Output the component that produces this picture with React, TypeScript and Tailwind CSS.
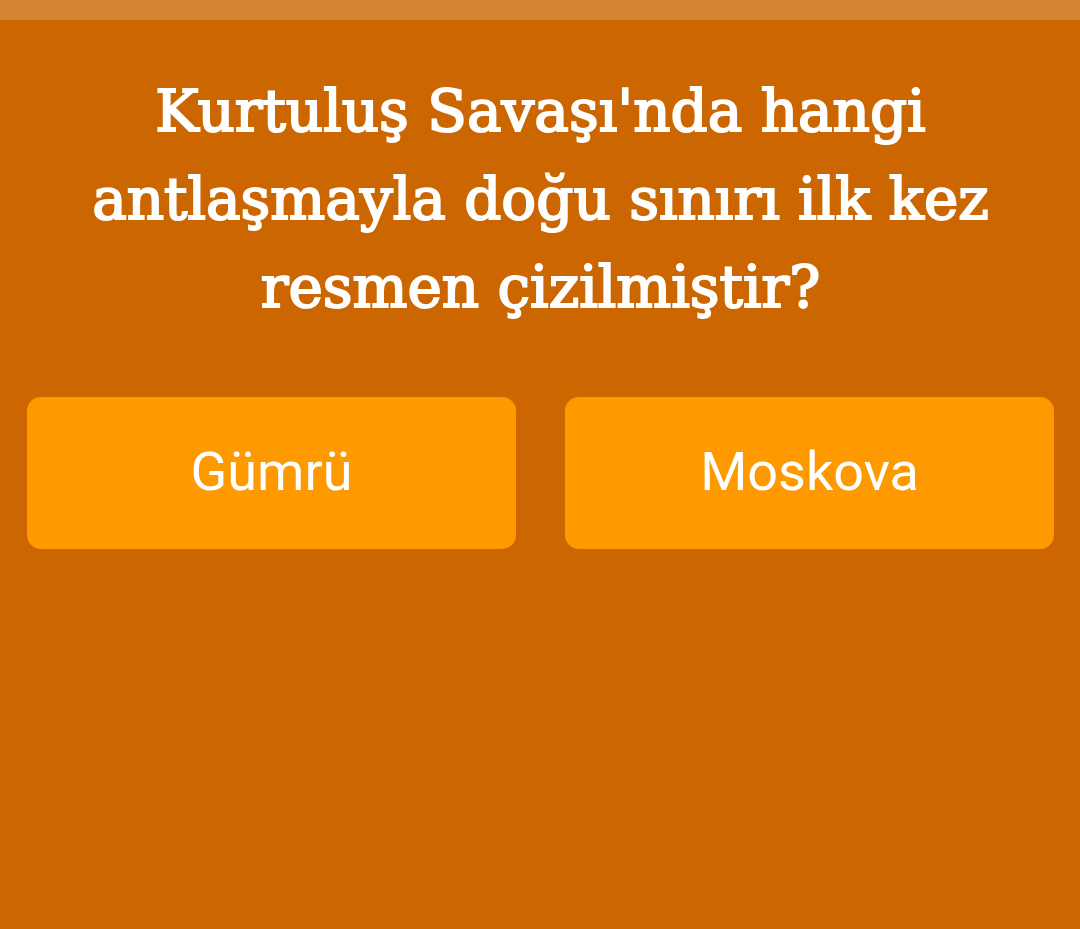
const answers = ["Gümrü", "Moskova"];

export default function App() {
  return (
    <main className="min-h-screen bg-[#cc6600]">
      <div className="h-5 bg-[#d68533]" />
      <div className="pt-[47px] pr-[26px] pl-[27px]">
        <h1 className="text-center font-['DejaVu_Serif',serif] text-[58px] leading-[88px] text-white [-webkit-text-stroke:2px_white]">
          Kurtuluş Savaşı'nda hangi
          <br />
          antlaşmayla doğu sınırı ilk kez
          <br />
          resmen çizilmiştir?
        </h1>
        <div className="mt-[66px] grid grid-cols-2 gap-[49px]">
          {answers.map((answer) => (
            <button
              key={answer}
              type="button"
              className="h-[152px] rounded-[14px] bg-[#ff9900] pb-1 font-['Roboto',sans-serif] text-[54px] text-white"
            >
              {answer}
            </button>
          ))}
        </div>
      </div>
    </main>
  );
}
